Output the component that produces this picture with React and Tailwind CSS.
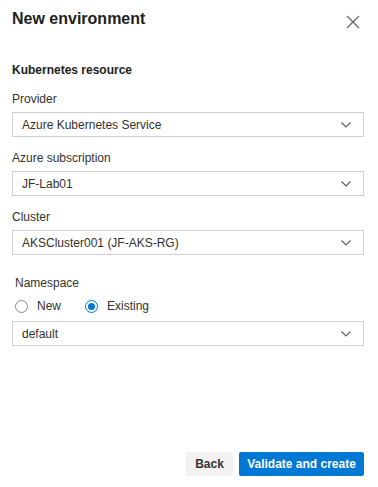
import React, { useState } from 'react';

const Chevron = () => (
  <svg width="12" height="8" viewBox="0 0 12 8" className="shrink-0">
    <polyline points="1.5,1.5 6,6 10.5,1.5" fill="none" stroke="#605e5c" strokeWidth="1.2" />
  </svg>
);

const Select = ({ value }) => (
  <div className="flex h-[25px] items-center justify-between border border-[#d2d0ce] pl-[9px] pr-[11px] text-[12px] text-[#323130]">
    <span>{value}</span>
    <Chevron />
  </div>
);

const Field = ({ label, value }) => (
  <div>
    <div className="mb-[4px] h-[18px] text-[12px] leading-[18px] text-[#323130]">{label}</div>
    <Select value={value} />
  </div>
);

const Radio = ({ checked, label, onClick }) => (
  <button onClick={onClick} className="flex items-center gap-[9px] text-[12px] text-[#323130]">
    <span
      className={`flex h-[13px] w-[13px] items-center justify-center rounded-full border ${
        checked ? 'border-[#0078d4]' : 'border-[#8a8886]'
      }`}
    >
      {checked && <span className="h-[7px] w-[7px] rounded-full bg-[#0078d4]" />}
    </span>
    {label}
  </button>
);

const App = () => {
  const [mode, setMode] = useState('existing');

  return (
    <div
      className="flex h-[487px] w-[378px] flex-col bg-white pl-[12px] pr-[14px]"
      style={{ fontFamily: '"Liberation Sans", Arial, sans-serif' }}
    >
      {/* header */}
      <div className="flex items-start justify-between pt-[7px]">
        <h1 className="h-[24px] text-[16px] font-bold leading-[24px] text-[#201f1e]">New environment</h1>
        <svg width="14" height="14" viewBox="0 0 14 14" className="mr-[4px] mt-[8px]">
          <path d="M1 1 L13 13 M13 1 L1 13" stroke="#605e5c" strokeWidth="1.1" />
        </svg>
      </div>

      <div className="mt-[30px] h-[18px] text-[12px] font-bold leading-[18px] text-[#201f1e]">Kubernetes resource</div>

      <div className="mt-[11px] flex flex-col gap-[12px]">
        <Field label="Provider" value="Azure Kubernetes Service" />
        <Field label="Azure subscription" value="JF-Lab01" />
        <Field label="Cluster" value="AKSCluster001 (JF-AKS-RG)" />
      </div>

      {/* namespace */}
      <div className="mt-[19px]">
        <div className="h-[18px] pl-[3px] text-[12px] leading-[18px] text-[#323130]">Namespace</div>
        <div className="mt-[4px] flex h-[20px] items-center gap-[24px] pl-[3px]">
          <Radio label="New" checked={mode === 'new'} onClick={() => setMode('new')} />
          <Radio label="Existing" checked={mode === 'existing'} onClick={() => setMode('existing')} />
        </div>
        <div className="mt-[5px]">
          <Select value="default" />
        </div>
      </div>

      {/* footer */}
      <div className="mt-auto mb-[11px] flex justify-end gap-[6px]">
        <button className="h-[24px] w-[47px] rounded-[2px] bg-[#f3f2f1] text-[12px] font-bold text-[#323130]">Back</button>
        <button className="h-[24px] w-[125px] rounded-[2px] bg-[#0078d4] text-[12px] font-bold text-white">
          Validate and create
        </button>
      </div>
    </div>
  );
};

export default App;
